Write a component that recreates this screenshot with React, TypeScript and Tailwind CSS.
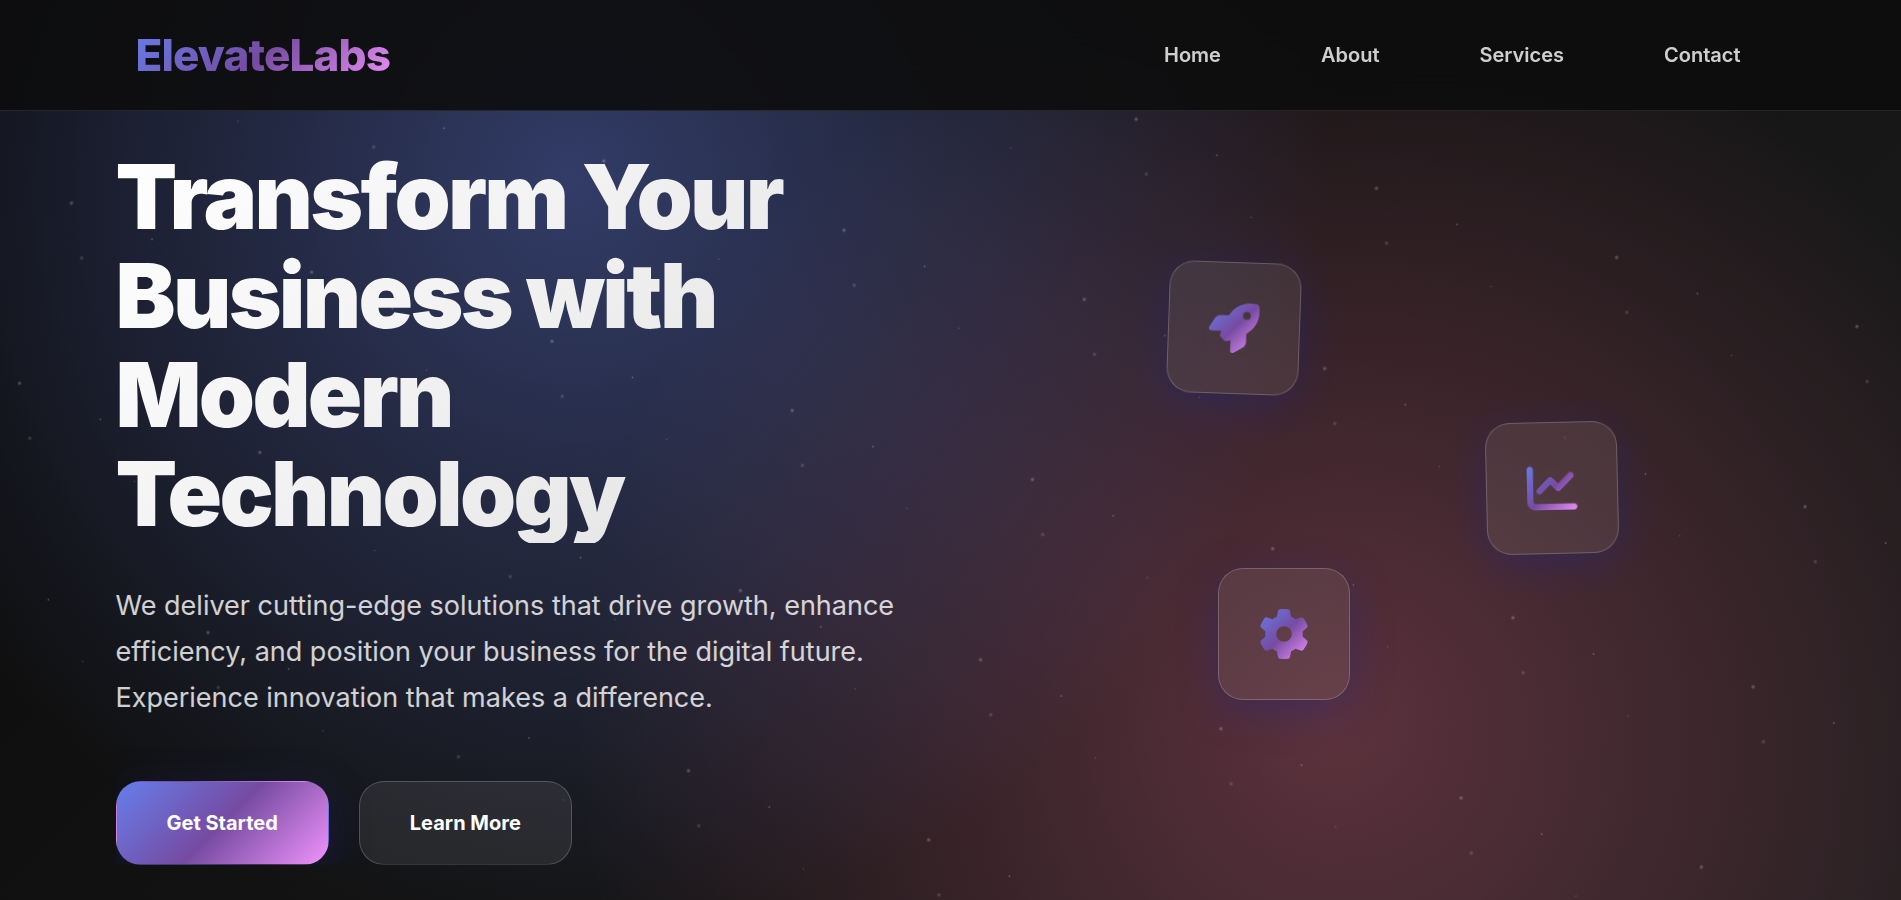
import type { ReactNode } from "react";
import { FaChartLine, FaGear, FaRocket } from "react-icons/fa6";

const links = ["Home", "About", "Services", "Contact"];

function Stars() {
  return (
    <div
      aria-hidden="true"
      className="pointer-events-none absolute inset-0 translate-y-[45px] rotate-[16.05deg] bg-[radial-gradient(2.5px_2.5px_at_25px_37.5px,rgba(255,255,255,0.3),transparent),radial-gradient(2.5px_2.5px_at_50px_87.5px,rgba(255,255,255,0.2),transparent),radial-gradient(1.25px_1.25px_at_112.5px_50px,rgba(255,255,255,0.4),transparent),radial-gradient(1.25px_1.25px_at_162.5px_100px,rgba(255,255,255,0.2),transparent)] bg-[length:250px_187.5px]"
    />
  );
}

function AccentGradient() {
  return (
    <svg aria-hidden="true" className="absolute size-0">
      <defs>
        <linearGradient id="accent" gradientUnits="userSpaceOnUse" x1="0" y1="0" x2="512" y2="512">
          <stop offset="0" stopColor="#667eea" />
          <stop offset="0.5" stopColor="#764ba2" />
          <stop offset="1" stopColor="#f093fb" />
        </linearGradient>
      </defs>
    </svg>
  );
}

function FloatingCard({ place, children }: { place: string; children: ReactNode }) {
  return (
    <div
      className={`absolute rounded-[25px] border border-white/20 bg-white/8 p-10 shadow-[0_10px_40px_rgba(31,38,135,0.37)] backdrop-blur-xl ${place}`}
    >
      {children}
    </div>
  );
}

export default function App() {
  return (
    <div className="relative flex min-h-screen flex-col overflow-hidden bg-[radial-gradient(circle_at_30%_20%,rgba(102,126,234,0.4)_0%,transparent_50%),radial-gradient(circle_at_70%_80%,rgba(250,110,148,0.3)_0%,transparent_50%),linear-gradient(135deg,#0b0b0b_0%,#1c1c1c_100%)] font-['Inter',sans-serif] text-white">
      <Stars />
      <AccentGradient />
      <header className="relative z-10 border-b border-white/10 bg-[#0c0c0c]/88 backdrop-blur-xl">
        <nav className="mx-auto flex h-[110px] max-w-[1750px] items-center justify-between px-[60px]">
          <a
            href="#"
            className="bg-[linear-gradient(135deg,#667eea_0%,#764ba2_50%,#f093fb_100%)] bg-clip-text text-[44px] leading-[70px] font-extrabold tracking-[-0.02em] text-transparent"
          >
            ElevateLabs
          </a>
          <ul className="flex gap-[50px]">
            {links.map((link) => (
              <li key={link}>
                <a href={`#${link.toLowerCase()}`} className="px-[25px] text-xl font-semibold text-white/80">
                  {link}
                </a>
              </li>
            ))}
          </ul>
        </nav>
      </header>
      <main className="relative mx-auto grid w-full max-w-[1750px] flex-1 grid-cols-2 items-center gap-20 px-10">
        <section>
          <h1 className="mb-10 bg-[linear-gradient(135deg,#ffffff_0%,#e0e0e0_100%)] bg-clip-text text-[90px] leading-[99px] font-black tracking-[-0.03em] text-transparent">
            Transform Your Business with Modern Technology
          </h1>
          <p className="mb-[60px] text-[27px] leading-[46px] text-white/80">
            We deliver cutting-edge solutions that drive growth, enhance efficiency, and position your business for
            the digital future. Experience innovation that makes a difference.
          </p>
          <div className="flex gap-[30px] [clip-path:inset(-60px_-60px_0_0)]">
            <button
              type="button"
              className="rounded-[25px] border border-transparent bg-[linear-gradient(135deg,#667eea_0%,#764ba2_50%,#f093fb_100%)] px-[50px] py-[25px] text-xl leading-8 font-bold shadow-[0_10px_40px_rgba(31,38,135,0.37)]"
            >
              Get Started
            </button>
            <button
              type="button"
              className="rounded-[25px] border border-white/20 bg-white/8 px-[50px] py-[25px] text-xl leading-8 font-bold"
            >
              Learn More
            </button>
          </div>
        </section>
        <div className="relative h-[625px]">
          <FloatingCard place="top-[69px] left-[177px] rotate-[2deg]">
            <FaRocket fill="url(#accent)" className="size-[50px]" />
          </FloatingCard>
          <FloatingCard place="top-[229px] left-[495px] rotate-[-1.3deg]">
            <FaChartLine fill="url(#accent)" className="size-[50px]" />
          </FloatingCard>
          <FloatingCard place="top-[375px] left-[227px]">
            <FaGear fill="url(#accent)" className="size-[50px]" />
          </FloatingCard>
        </div>
      </main>
    </div>
  );
}
